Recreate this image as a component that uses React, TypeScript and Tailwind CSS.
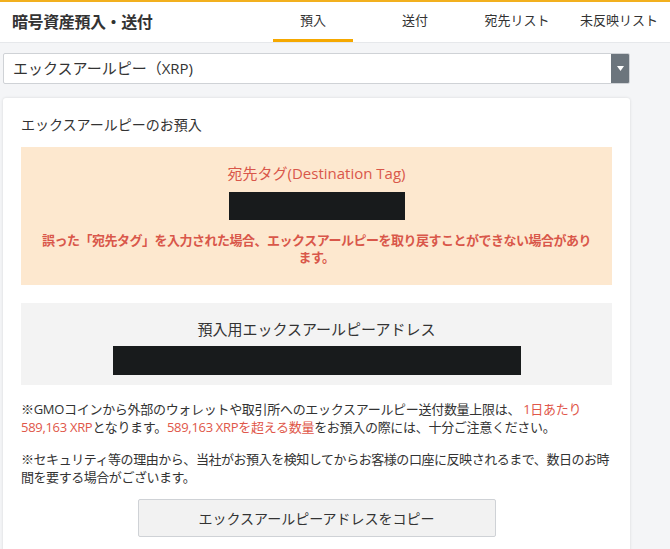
const font = {
  fontFamily: '"Segoe UI", "Open Sans", "Noto Sans CJK JP", sans-serif',
};

const tabs = ["預入", "送付", "宛先リスト", "未反映リスト"];

export default function App() {
  return (
    <div className="min-h-[549px] bg-[#f4f5f7] text-[#333]" style={font}>
      {/* Header */}
      <header className="flex h-[43px] items-stretch border-t-2 border-b border-t-[#f2b01e] border-b-[#e6e8eb] bg-white">
        <h1 className="flex items-center pl-3 text-[16px] font-bold tracking-tight text-[#333]">
          暗号資産預入・送付
        </h1>
        <nav className="ml-auto flex w-[408px]">
          {tabs.map((t, i) => (
            <div
              key={t}
              className="flex w-[102px] flex-col items-center justify-end"
            >
              <span className="pb-[9px] text-[13px] text-[#333]">{t}</span>
              <span
                className={`h-[3px] w-[80px] ${
                  i === 0 ? "bg-[#f5a800]" : "bg-transparent"
                }`}
              />
            </div>
          ))}
        </nav>
      </header>

      {/* Currency select */}
      <div className="ml-[3px] mt-[10px] flex h-[31px] w-[627px] overflow-hidden rounded-[2px] border border-[#cfd2d6] bg-white">
        <div className="flex flex-1 items-center pl-[9px] text-[15px] text-[#333]">
          エックスアールピー（XRP)
        </div>
        <div className="flex w-[18px] items-center justify-center bg-[#6c757d]">
          <svg width="7" height="5" viewBox="0 0 7 5">
            <path d="M0 0h7L3.5 5z" fill="#fff" />
          </svg>
        </div>
      </div>

      {/* Card */}
      <section className="ml-[3px] mt-[14px] w-[627px] rounded-t-[3px] bg-white px-[18px] pb-[20px] pt-[17px] shadow-[0_0_3px_rgba(0,0,0,0.12)]">
        <h2 className="text-[14px] leading-[20px] text-[#333]">
          エックスアールピーのお預入
        </h2>

        {/* Destination tag */}
        <div className="mt-[12px] flex h-[138px] flex-col items-center bg-[#fde8cf] pt-[15px]">
          <p className="text-[15px] leading-[22px] text-[#d9574a]">
            宛先タグ(Destination Tag)
          </p>
          <div className="mt-[8px] h-[28px] w-[176px] bg-[#181b1c]" />
          <p className="mt-[12px] px-[8px] text-center text-[13px] font-bold leading-[17px] tracking-[-0.5px] text-[#d9574a]">
            誤った「宛先タグ」を入力された場合、エックスアールピーを取り戻すことができない場合があり
            <br />
            ます。
          </p>
        </div>

        {/* Address */}
        <div className="mt-[18px] flex h-[82px] flex-col items-center bg-[#f3f3f3] pt-[15px]">
          <p className="text-[15px] leading-[22px] text-[#333]">
            預入用エックスアールピーアドレス
          </p>
          <div className="mt-[6px] h-[29px] w-[408px] bg-[#181b1c]" />
        </div>

        <p className="mt-[15px] text-[13px] leading-[18px] tracking-[-0.3px] text-[#333]">
          ※GMOコインから外部のウォレットや取引所へのエックスアールピー送付数量上限は、{" "}
          <span className="text-[#e0574a]">1日あたり 589,163 XRP</span>
          となります。
          <span className="text-[#e0574a]">589,163 XRPを超える数量</span>
          をお預入の際には、十分ご注意ください。
        </p>
        <p className="mt-[14px] text-[13px] leading-[18px] tracking-[-0.45px] text-[#333]">
          ※セキュリティ等の理由から、当社がお預入を検知してからお客様の口座に反映されるまで、数日のお時間を要する場合がございます。
        </p>

        <div className="mt-[13px] flex justify-center">
          <button className="h-[38px] w-[358px] rounded-[2px] border border-[#cfd2d6] bg-[#f2f2f2] text-[14px] text-[#333]">
            エックスアールピーアドレスをコピー
          </button>
        </div>
      </section>
    </div>
  );
}
